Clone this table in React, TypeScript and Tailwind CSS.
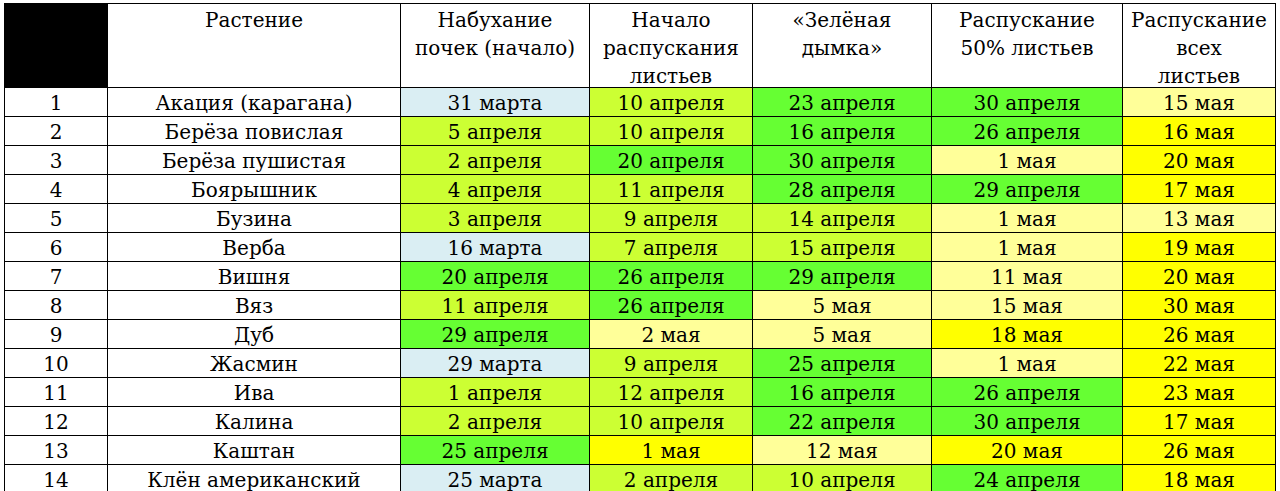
import React from "react";

type C = "b" | "g" | "G" | "p" | "y";

const bg: Record<C, string> = {
  b: "bg-[#daeef3]",
  g: "bg-[#ccff33]",
  G: "bg-[#66ff33]",
  p: "bg-[#ffff99]",
  y: "bg-[#ffff00]",
};

const rows: [string, [string, C][]][] = [
  ["Акация (карагана)", [["31 марта", "b"], ["10 апреля", "g"], ["23 апреля", "G"], ["30 апреля", "G"], ["15 мая", "p"]]],
  ["Берёза повислая", [["5 апреля", "g"], ["10 апреля", "g"], ["16 апреля", "G"], ["26 апреля", "G"], ["16 мая", "y"]]],
  ["Берёза пушистая", [["2 апреля", "g"], ["20 апреля", "G"], ["30 апреля", "G"], ["1 мая", "p"], ["20 мая", "y"]]],
  ["Боярышник", [["4 апреля", "g"], ["11 апреля", "g"], ["28 апреля", "G"], ["29 апреля", "G"], ["17 мая", "y"]]],
  ["Бузина", [["3 апреля", "g"], ["9 апреля", "g"], ["14 апреля", "g"], ["1 мая", "p"], ["13 мая", "p"]]],
  ["Верба", [["16 марта", "b"], ["7 апреля", "g"], ["15 апреля", "g"], ["1 мая", "p"], ["19 мая", "y"]]],
  ["Вишня", [["20 апреля", "G"], ["26 апреля", "G"], ["29 апреля", "G"], ["11 мая", "p"], ["20 мая", "y"]]],
  ["Вяз", [["11 апреля", "g"], ["26 апреля", "G"], ["5 мая", "p"], ["15 мая", "p"], ["30 мая", "y"]]],
  ["Дуб", [["29 апреля", "G"], ["2 мая", "p"], ["5 мая", "p"], ["18 мая", "y"], ["26 мая", "y"]]],
  ["Жасмин", [["29 марта", "b"], ["9 апреля", "g"], ["25 апреля", "G"], ["1 мая", "p"], ["22 мая", "y"]]],
  ["Ива", [["1 апреля", "g"], ["12 апреля", "g"], ["16 апреля", "G"], ["26 апреля", "G"], ["23 мая", "y"]]],
  ["Калина", [["2 апреля", "g"], ["10 апреля", "g"], ["22 апреля", "G"], ["30 апреля", "G"], ["17 мая", "y"]]],
  ["Каштан", [["25 апреля", "G"], ["1 мая", "y"], ["12 мая", "p"], ["20 мая", "y"], ["26 мая", "y"]]],
  ["Клён американский", [["25 марта", "b"], ["2 апреля", "g"], ["10 апреля", "g"], ["24 апреля", "G"], ["18 мая", "y"]]],
];

const headers = [
  ["Растение"],
  ["Набухание", "почек (начало)"],
  ["Начало", "распускания", "листьев"],
  ["«Зелёная", "дымка»"],
  ["Распускание", "50% листьев"],
  ["Распускание", "всех", "листьев"],
];

export default function App() {
  return (
    <div className="bg-white pt-[3px] pl-[4px] text-black [font-family:'DejaVu_Serif',serif] text-[20px]">
      <table className="table-fixed border-collapse w-[1271px]">
        <colgroup>
          <col className="w-[103px]" />
          <col className="w-[293px]" />
          <col className="w-[189px]" />
          <col className="w-[163px]" />
          <col className="w-[179px]" />
          <col className="w-[191px]" />
          <col className="w-[153px]" />
        </colgroup>
        <thead>
          <tr>
            <th className="bg-black border border-black p-0 h-[84px]" />
            {headers.map((h, i) => (
              <th
                key={i}
                className="border border-black align-top font-normal p-0 text-center whitespace-nowrap"
              >
                <div className="h-[83px] overflow-visible pt-[2px] leading-[28px]">
                  {h.map((l, j) => (
                    <div key={j}>{l}</div>
                  ))}
                </div>
              </th>
            ))}
          </tr>
        </thead>
        <tbody>
          {rows.map(([name, cells], i) => (
            <tr key={i} className="h-[29px]">
              <td className="border border-black text-center px-0 pt-[2px] pb-0 leading-[26px]">{i + 1}</td>
              <td className="border border-black text-center px-0 pt-[2px] pb-0 leading-[26px] whitespace-nowrap">{name}</td>
              {cells.map(([t, c], j) => (
                <td
                  key={j}
                  className={`border border-black text-center px-0 pt-[2px] pb-0 leading-[26px] whitespace-nowrap ${bg[c]}`}
                >
                  {t}
                </td>
              ))}
            </tr>
          ))}
        </tbody>
      </table>
    </div>
  );
}
